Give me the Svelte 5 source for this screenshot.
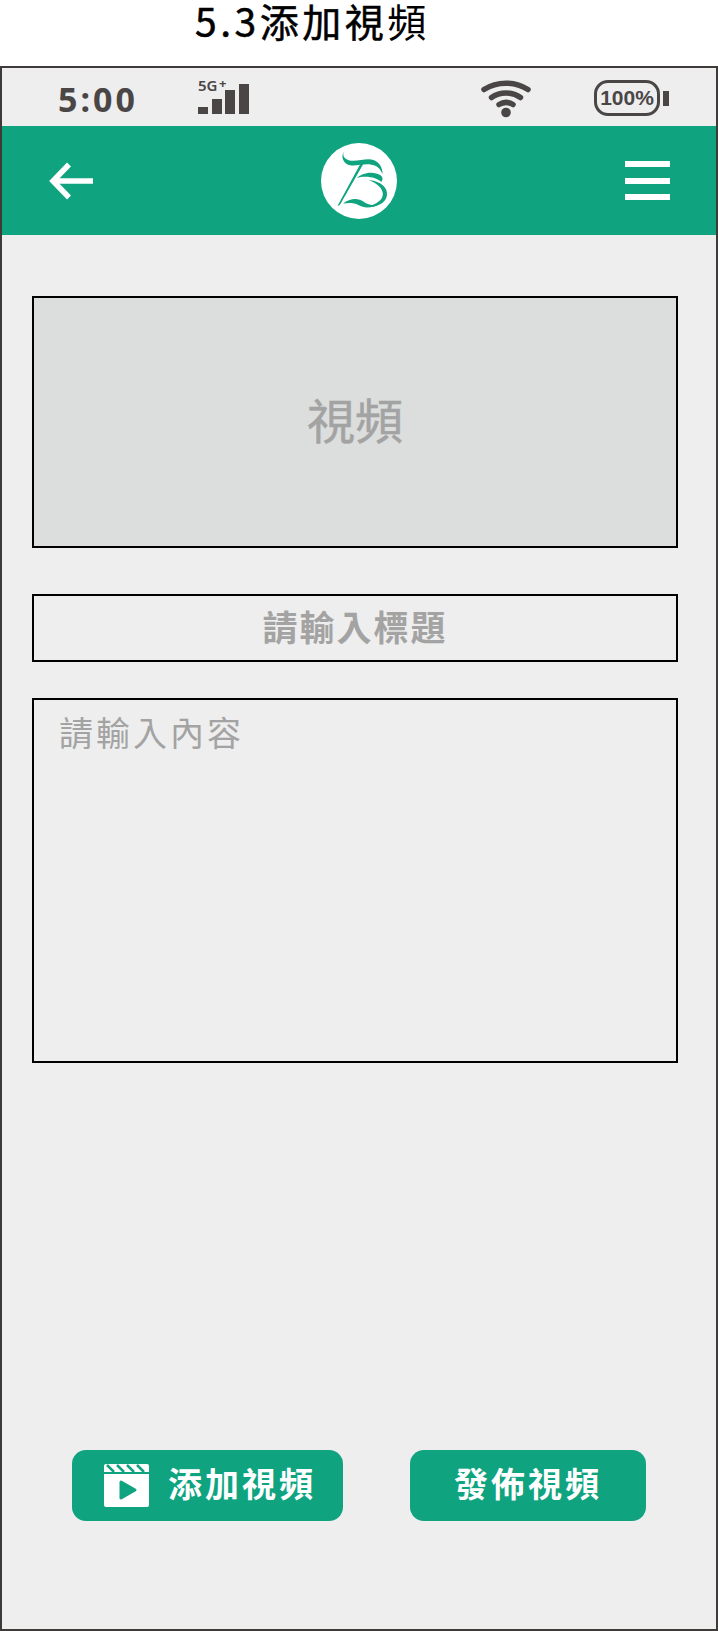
<script>
  const bars = [
    { x: 0, y: 24, h: 7 },
    { x: 14, y: 16, h: 15 },
    { x: 27, y: 7, h: 24 },
    { x: 41, y: 1, h: 30 },
  ]
</script>

<div class="page">
  <h1 class="heading">5.3添加視<span class="thin">頻</span></h1>

  <div class="phone">
    <div class="status">
      <span class="time">5:00</span>
      <div class="signal">
        <span class="net">5G</span>
        <span class="plus">+</span>
        <svg width="52" height="32" viewBox="0 0 52 32">
          {#each bars as b}
            <rect x={b.x} y={b.y} width="10" height={b.h} fill="#4a4646" />
          {/each}
        </svg>
      </div>
      <svg class="wifi" width="50" height="38" viewBox="0 0 50 38">
        <g fill="none" stroke="#4a4646" stroke-width="5.5" stroke-linecap="round">
          <path d="M3 9.500C16 1 34 1 47 9.500" />
          <path d="M10.500 17.500C19 11.500 31 11.500 39.500 17.500" />
          <path d="M18 24.500C22.500 21.800 27.500 21.800 32 24.500" />
        </g>
        <circle cx="25" cy="32.500" r="4.800" fill="#4a4646" />
      </svg>
      <div class="battery">
        <div class="cell">100%</div>
        <div class="nub"></div>
      </div>
    </div>

    <header class="appbar">
      <svg class="back" width="44" height="38" viewBox="0 0 44 38">
        <path d="M20 2.500L4 19l16 16.500M5 19h39" fill="none" stroke="#fff" stroke-width="5.500" />
      </svg>
      <svg class="logo" width="76" height="76" viewBox="94 38 226 226">
        <circle cx="207" cy="151" r="113" fill="#fff" />
        <g fill="#0fa37f">
          <path d="M164 62c-7 10-4 22 12 27 24 6 54-8 76 0 16 6 26 24 25 42-6-17-18-27-36-29-24-3-50 8-68 0-16-8-20-28-9-40z" />
          <path d="M212 98h9L150 222l-7 3z" />
          <path d="M200 143c14-16 50-24 72-8 6 5 7 13 1 19-11-13-48-21-73-11z" />
          <path d="M235 148c28 2 60 18 55 47-5 27-40 37-68 33 28-3 56-16 56-38 0-20-23-35-43-42z" />
          <path d="M160 218c18-16 45-18 60-6 12 10 30 12 42 10-17 10-42 9-57 0-13-7-30-7-45-4z" />
        </g>
      </svg>
      <div class="menu"><span></span><span></span><span></span></div>
    </header>

    <main class="form">
      <div class="box video"><span>視頻</span></div>
      <div class="box title-input"><span>請輸入標題</span></div>
      <div class="box content-input">請輸入內容</div>

      <div class="actions">
        <button class="btn add">
          <svg width="45" height="43" viewBox="0 0 45 43">
            <path d="M2 0h41a2 2 0 0 1 2 2v6H0V2a2 2 0 0 1 2-2z" fill="#fff" />
            <path d="M3 1l7 7M13 1l7 7M23 1l7 7M33 1l7 7" stroke="#0fa37f" stroke-width="2.500" />
            <path d="M0 10h45v31a2 2 0 0 1-2 2H2a2 2 0 0 1-2-2z" fill="#fff" />
            <path d="M17 18l14 8-14 8z" fill="#0fa37f" stroke="#0fa37f" stroke-width="3" stroke-linejoin="round" />
          </svg>
          <span>添加視頻</span>
        </button>
        <button class="btn publish"><span>發佈視頻</span></button>
      </div>
    </main>
  </div>
</div>

<style>
  :global(body) {
    margin: 0;
    background: #fff;
  }

  .page {
    width: 718px;
    height: 1631px;
    font-family: "Noto Sans CJK TC", "Noto Sans", sans-serif;
  }

  .heading {
    height: 66px;
    margin: 0;
    padding-left: 195px;
    box-sizing: border-box;
    font-size: 39px;
    line-height: 40px;
    font-weight: 400;
    letter-spacing: 3.500px;
    color: #000;
    -webkit-text-stroke: 0.5px #000;
  }
  .thin {
    font-weight: 400;
    -webkit-text-stroke: 0;
  }

  .phone {
    height: 1565px;
    box-sizing: border-box;
    border: 2px solid #3e3a39;
    background: #eeeeee;
    display: flex;
    flex-direction: column;
  }

  .status {
    height: 58px;
    display: flex;
    align-items: center;
    color: #4a4646;
  }
  .time {
    margin-left: 56px;
    width: 140px;
    font-family: "Noto Sans", sans-serif;
    font-weight: 700;
    font-size: 34px;
    letter-spacing: 3px;
    line-height: 40px;
    margin-top: 3px;
  }
  .signal {
    position: relative;
    width: 52px;
    height: 32px;
    margin-top: 4px;
  }
  .signal svg {
    display: block;
  }
  .net {
    position: absolute;
    left: 0;
    top: -6px;
    font-family: "Noto Sans", sans-serif;
    font-weight: 600;
    font-size: 15px;
    line-height: 16px;
  }
  .plus {
    position: absolute;
    left: 21px;
    top: -7px;
    font-family: "Noto Sans", sans-serif;
    font-weight: 700;
    font-size: 13px;
    line-height: 14px;
  }
  .wifi {
    margin-left: 231px;
    margin-top: 3px;
  }
  .battery {
    display: flex;
    align-items: center;
    margin-left: 63px;
    margin-top: 2px;
  }
  .cell {
    width: 66px;
    height: 36px;
    box-sizing: border-box;
    border: 3px solid #4a4646;
    border-radius: 14px;
    text-align: center;
    font-family: "Liberation Sans", sans-serif;
    font-weight: 700;
    font-size: 21px;
    line-height: 30px;
  }
  .nub {
    width: 6px;
    height: 15px;
    margin-left: 3px;
    background: #4a4646;
  }

  .appbar {
    height: 109px;
    background: #0fa37f;
    display: flex;
    align-items: center;
    justify-content: space-between;
    padding: 0 46px 0 47px;
  }
  .menu {
    width: 45px;
    display: flex;
    flex-direction: column;
    gap: 10.500px;
  }
  .menu span {
    height: 6px;
    background: #fff;
  }

  .form {
    flex: 1;
    display: flex;
    flex-direction: column;
    padding: 61px 38px 0 30px;
  }
  .box {
    box-sizing: border-box;
    border: 2px solid #000;
    color: #a3a3a3;
  }
  .video {
    height: 252px;
    background: #dcdddd;
    display: flex;
    align-items: center;
    justify-content: center;
    padding-bottom: 8px;
    font-size: 48px;
    -webkit-text-stroke: 0.5px #a3a3a3;
  }
  .title-input {
    height: 68px;
    margin-top: 46px;
    display: flex;
    align-items: center;
    justify-content: center;
    padding-bottom: 6px;
    font-size: 35px;
    font-weight: 700;
    letter-spacing: 2px;
  }
  .content-input {
    height: 365px;
    margin-top: 36px;
    padding: 7px 0 0 25px;
    font-size: 34px;
    line-height: 50px;
    letter-spacing: 3px;
  }

  .actions {
    display: flex;
    margin-top: 387px;
    padding-left: 40px;
    gap: 67px;
  }
  .btn {
    height: 71px;
    border: 0;
    border-radius: 14px;
    background: #0fa37f;
    color: #fff;
    font-family: inherit;
    font-size: 34px;
    font-weight: 700;
    letter-spacing: 3px;
    display: flex;
    align-items: center;
    justify-content: center;
    padding: 0;
  }
  .btn span {
    margin-bottom: 6px;
  }
  .add {
    width: 271px;
    gap: 19px;
    padding-left: 5px;
  }
  .publish {
    width: 236px;
  }
</style>
